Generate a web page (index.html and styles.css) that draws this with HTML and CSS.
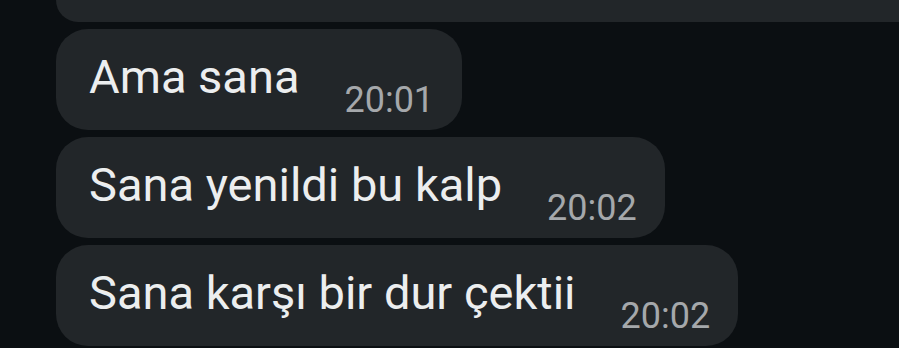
FILE: index.html
```html
<!DOCTYPE html>
<html>
<head>
    <title>Sohbet</title>
    <link rel="stylesheet" href="styles.css">
</head>
<body>
    <!-- Mesajlar -->
    <div class="chat">
        <div class="bubble bubble-cut"></div>
        <div class="bubble">
            <span class="text">Ama sana</span>
            <span class="time">20:01</span>
        </div>
        <div class="bubble">
            <span class="text">Sana yenildi bu kalp</span>
            <span class="time">20:02</span>
        </div>
        <div class="bubble">
            <span class="text">Sana karşı bir dur çektii</span>
            <span class="time">20:02</span>
        </div>
    </div>
</body>
</html>
```

FILE: styles.css
```css
body {
    background-color: #0b0f12;
    color: #eceeef;
    font-family: Roboto, "Noto Sans", Arial, sans-serif;
    margin: 0;
    padding: 0;
    overflow: hidden;
}
.chat {
    display: flex;
    flex-direction: column;
    align-items: flex-start;
    gap: 7px;
    padding-left: 56px;
}
.bubble {
    display: flex;
    align-items: flex-start;
    gap: 45px;
    box-sizing: border-box;
    height: 101px;
    padding: 24px 28px 0 33px;
    background-color: #222629;
    border-radius: 32px;
}
.bubble-cut {
    align-self: stretch;
    height: 22px;
    padding: 0;
    border-radius: 0 0 0 30px;
}
.text {
    font-size: 47px;
    line-height: 47px;
    white-space: nowrap;
}
.time {
    font-size: 36px;
    line-height: 36px;
    margin-top: 29px;
    color: #a5a8ab;
}
```
